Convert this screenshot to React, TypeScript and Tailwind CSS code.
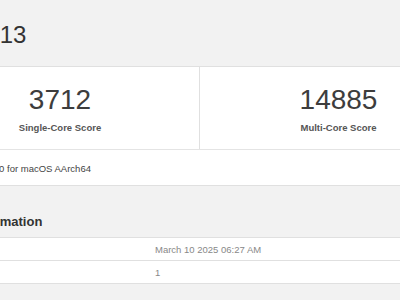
export default function App() {
  const info = [
    { label: "Upload Date", value: "March 10 2025 06:27 AM" },
    { label: "Views", value: "1" },
  ];

  return (
    <div className="w-[400px] h-[300px] overflow-hidden bg-[#f2f2f2] font-['Liberation_Sans',Arial,sans-serif]">
      <div className="ml-[-79px] w-[556px]">
        {/* Title */}
        <div className="h-[66px] pt-[23px]">
          <h1 className="text-[24px] leading-[24px] text-[#333]">Mac16,13</h1>
        </div>

        {/* Score card */}
        <div className="bg-white border-y border-[#e0e0e0]">
          <div className="grid grid-cols-2 border-b border-[#e4e4e4]">
            <div className="flex flex-col items-center pt-[19px] pb-[15px]">
              <div className="text-[28px] leading-[28px] text-[#3d3d3d]">3712</div>
              <div className="mt-[8px] text-[9.5px] leading-[12px] font-semibold text-[#555]">
                Single-Core Score
              </div>
            </div>
            <div className="flex flex-col items-center pt-[19px] pb-[15px] border-l border-[#e0e0e0]">
              <div className="text-[28px] leading-[28px] text-[#3d3d3d]">14885</div>
              <div className="mt-[8px] text-[9.5px] leading-[12px] font-semibold text-[#555]">
                Multi-Core Score
              </div>
            </div>
          </div>
          <div className="h-[35px] flex items-center pt-[3px] pl-[11px] text-[9.5px] text-[#444]">
            Geekbench 6.4.0 for macOS AArch64
          </div>
        </div>

        {/* System Information */}
        <div className="pt-[28px] pb-[7px]">
          <h2 className="text-[13px] leading-[16px] font-bold text-[#333]">System Information</h2>
        </div>
        <div className="bg-white border-t border-[#e0e0e0]">
          {info.map((row) => (
            <div key={row.label} className="h-[23px] flex items-center pt-[3px] border-b border-[#e0e0e0] text-[9.5px]">
              <div className="w-[234px] pl-[11px] font-semibold text-[#555]">{row.label}</div>
              <div className="text-[#888]">{row.value}</div>
            </div>
          ))}
        </div>
      </div>
    </div>
  );
}
